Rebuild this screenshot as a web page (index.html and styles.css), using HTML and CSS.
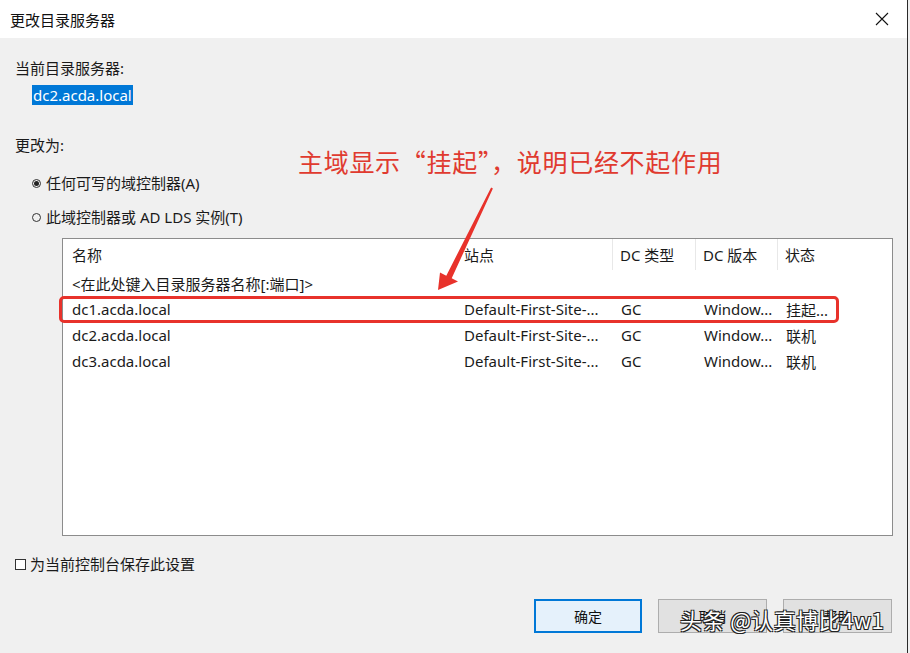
FILE: index.html
```html
<!DOCTYPE html>
<html lang="zh-CN">
<head>
    <meta charset="UTF-8">
    <meta name="viewport" content="width=device-width, initial-scale=1.0">
    <title>更改目录服务器</title>
    <link rel="stylesheet" href="styles.css">
</head>
<body>
    <div class="window">
        <div class="titlebar">
            <span class="title">更改目录服务器</span>
            <svg class="close" width="14" height="14" viewBox="0 0 14 14">
                <path d="M1 1 L13 13 M13 1 L1 13" stroke="#111" stroke-width="1.1" fill="none"/>
            </svg>
        </div>

        <div class="content">
            <div class="label">当前目录服务器:</div>
            <div class="current"><span class="selected">dc2.acda.local</span></div>

            <div class="label change-to">更改为:</div>
            <div class="option first">
                <span class="radio checked"></span>
                <span>任何可写的域控制器(A)</span>
            </div>
            <div class="option">
                <span class="radio"></span>
                <span>此域控制器或 AD LDS 实例(T)</span>
            </div>

            <div class="listbox">
                <div class="row header">
                    <div class="cell">名称</div>
                    <div class="cell">站点</div>
                    <div class="cell sep">DC 类型</div>
                    <div class="cell sep">DC 版本</div>
                    <div class="cell sep">状态</div>
                </div>
                <div class="row">
                    <div class="cell wide">&lt;在此处键入目录服务器名称[:端口]&gt;</div>
                </div>
                <div class="row">
                    <div class="cell">dc1.acda.local</div>
                    <div class="cell">Default-First-Site-...</div>
                    <div class="cell">GC</div>
                    <div class="cell">Window...</div>
                    <div class="cell">挂起...</div>
                </div>
                <div class="row">
                    <div class="cell">dc2.acda.local</div>
                    <div class="cell">Default-First-Site-...</div>
                    <div class="cell">GC</div>
                    <div class="cell">Window...</div>
                    <div class="cell">联机</div>
                </div>
                <div class="row">
                    <div class="cell">dc3.acda.local</div>
                    <div class="cell">Default-First-Site-...</div>
                    <div class="cell">GC</div>
                    <div class="cell">Window...</div>
                    <div class="cell">联机</div>
                </div>
            </div>

            <div class="option save">
                <span class="checkbox"></span>
                <span>为当前控制台保存此设置</span>
            </div>

            <div class="buttons">
                <button class="btn primary">确定</button>
                <button class="btn">取消</button>
                <button class="btn">帮助</button>
            </div>
        </div>

        <!-- annotation drawn on top of the screenshot -->
        <div class="note">主域显示“挂起”，说明已经不起作用</div>
        <div class="mark"></div>
        <svg class="arrow" width="910" height="653" viewBox="0 0 910 653">
            <polygon fill="#e8322b" points="491.1,187.6 492.9,188.4 451.7,278.3 458,281.4 438,290 440,272.6 446.3,275.7"/>
        </svg>
        <div class="watermark">头条 @认真博比4w1</div>
    </div>
</body>
</html>
```

FILE: styles.css
```css
body {
    margin: 0;
    width: 910px;
    height: 653px;
    overflow: hidden;
    background: #f0f0f0;
    font-family: "Noto Sans", "Noto Sans CJK SC", sans-serif;
    font-size: 15px;
    color: #1a1a1a;
}

.window {
    position: relative;
    width: 907px;
    height: 653px;
    background: #f0f0f0;
    border-right: 1px solid #2a2a2a;
}

.titlebar {
    height: 38px;
    background: #fff;
    display: flex;
    align-items: center;
    justify-content: space-between;
    padding: 0 18px 0 10px;
}

.title {
    font-family: "Noto Sans CJK SC", sans-serif;
    font-size: 15px;
    color: #111;
}

.content {
    padding: 20px 15px 0 15px;
}

.label {
    line-height: 20px;
}

.current {
    margin: 8px 0 0 17px;
    line-height: 19px;
}

.selected {
    background: #0078d7;
    color: #fff;
    padding: 0 1px;
}

.change-to {
    margin-top: 30px;
}

.option {
    display: flex;
    align-items: center;
    gap: 5px;
    line-height: 20px;
    margin: 14px 0 0 17px;
}

.option.first {
    margin-top: 18px;
}

.radio {
    width: 7px;
    height: 7px;
    border: 1px solid #333;
    border-radius: 50%;
    display: inline-flex;
    align-items: center;
    justify-content: center;
}

.radio.checked::after {
    content: '';
    width: 5px;
    height: 5px;
    border-radius: 50%;
    background: #222;
}

.listbox {
    margin: 11px 0 0 47px;
    width: 829px;
    height: 296px;
    background: #fff;
    border: 1px solid #8c8c8c;
}

.row {
    display: grid;
    grid-template-columns: 392px 157px 83px 82px 1fr;
    height: 26px;
    align-items: center;
}

.row.header {
    height: 31px;
    align-items: stretch;
}

.row.header .cell {
    display: flex;
    align-items: center;
}

.cell {
    padding-left: 9px;
    white-space: nowrap;
    overflow: hidden;
}

.cell.sep {
    border-left: 1px solid #e8e8e8;
    padding-left: 7px;
}

.cell.wide {
    grid-column: 1 / -1;
}

.option.save {
    margin: 18px 0 0 0;
    gap: 4px;
}

.checkbox {
    width: 9px;
    height: 9px;
    border: 1px solid #333;
    background: #fff;
}

.buttons {
    display: flex;
    justify-content: flex-end;
    gap: 16px;
    margin-top: 25px;
}

.btn {
    width: 109px;
    height: 34px;
    font-family: "Noto Sans CJK SC", sans-serif;
    font-size: 14px;
    color: #111;
    background: #e1e1e1;
    border: 1px solid #adadad;
}

.btn.primary {
    background: #e5f1fb;
    border: 2px solid #0078d7;
    width: 108px;
}

.note {
    position: absolute;
    left: 298px;
    top: 145px;
    font-family: "Noto Sans CJK SC", sans-serif;
    font-size: 25px;
    line-height: 32px;
    letter-spacing: 0.7px;
    color: #e03a2f;
    white-space: nowrap;
}

.mark {
    position: absolute;
    left: 59px;
    top: 296px;
    width: 774px;
    height: 21px;
    border: 3px solid #e8322b;
    border-radius: 5px;
}

.arrow {
    position: absolute;
    left: 0;
    top: 0;
}

.watermark {
    position: absolute;
    left: 680px;
    top: 604px;
    font-family: "Noto Sans CJK SC", sans-serif;
    font-size: 22px;
    line-height: 30px;
    letter-spacing: 0.4px;
    color: #fff;
    white-space: nowrap;
    text-shadow: 1px 1px 0 #222, -1px -1px 0 #222, 1px -1px 0 #222, -1px 1px 0 #222;
}
```
